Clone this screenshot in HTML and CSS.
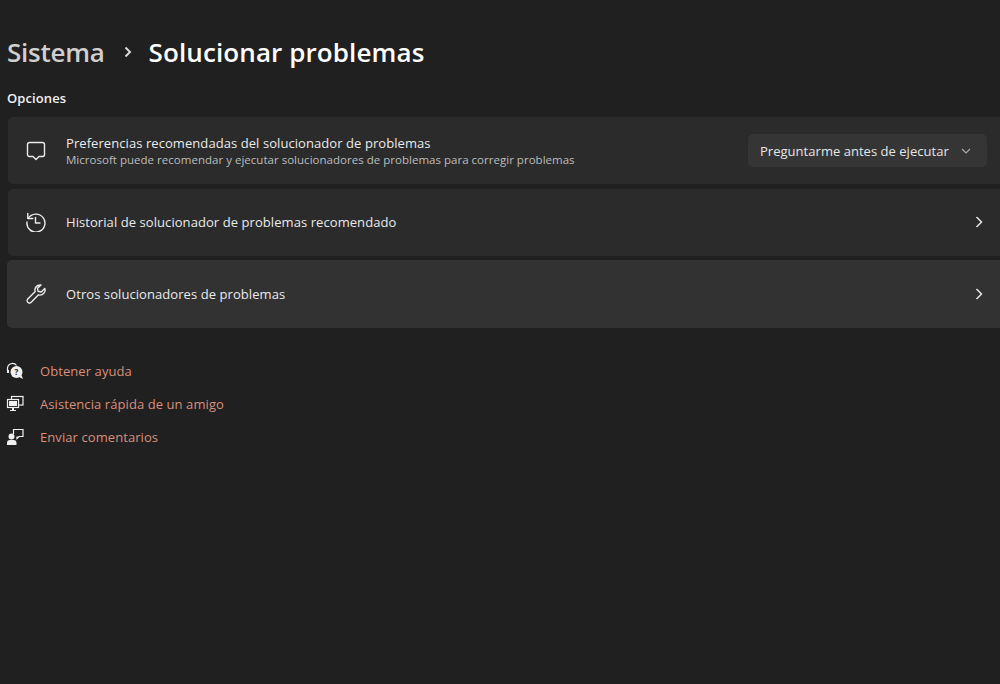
FILE: index.html
```html
<!DOCTYPE html>
<html lang="es">
<head>
<meta charset="utf-8">
<title>Solucionar problemas</title>
<link rel="stylesheet" href="styles.css">
</head>
<body>
<main class="page">
  <header class="crumbs">
    <span class="crumb-parent">Sistema</span>
    <svg class="crumb-sep" width="10" height="12" viewBox="0 0 10 12"><path d="M2.500 1.500 7 6l-4.500 4.500"/></svg>
    <h1 class="crumb-current">Solucionar problemas</h1>
  </header>
  <h2 class="section">Opciones</h2>
  <section class="cards">
    <div class="card">
      <svg class="card-icon" width="20" height="20" viewBox="0 0 20 20"><path d="M3.500 1.500h13a2 2 0 0 1 2 2v10a2 2 0 0 1-2 2h-3.500L10 18.500 7 15.500H3.500a2 2 0 0 1-2-2v-10a2 2 0 0 1 2-2z"/></svg>
      <div class="card-text">
        <div class="card-title">Preferencias recomendadas del solucionador de problemas</div>
        <div class="card-sub">Microsoft puede recomendar y ejecutar solucionadores de problemas para corregir problemas</div>
      </div>
      <div class="select">
        <span>Preguntarme antes de ejecutar</span>
        <svg class="select-chev" width="10" height="6" viewBox="0 0 10 6"><path d="M1 1l4 4 4-4"/></svg>
      </div>
    </div>
    <div class="card">
      <svg class="card-icon" width="20" height="20" viewBox="0 0 20 20"><path d="M2.200 6.500A9 9 0 1 1 1 10"/><path d="M1.800 1.500v5h5"/><path d="M9.500 5.500v5.500h4.500"/></svg>
      <div class="card-text"><div class="card-title">Historial de solucionador de problemas recomendado</div></div>
      <svg class="chev" width="8" height="12" viewBox="0 0 8 12"><path d="M1.500 1 6.500 6l-5 5"/></svg>
    </div>
    <div class="card card-hover">
      <svg class="card-icon" width="20" height="20" viewBox="0 0 20 20"><path d="M14 1a5 5 0 0 0-4.800 6.500L1.800 14.900a2.400 2.400 0 0 0 3.400 3.400l7.300-7.500A5 5 0 0 0 18.800 4.500l-3.600 3.500-3.100-.7-.6-3 3.500-3.300A5 5 0 0 0 14 1z"/></svg>
      <div class="card-text"><div class="card-title">Otros solucionadores de problemas</div></div>
      <svg class="chev" width="8" height="12" viewBox="0 0 8 12"><path d="M1.500 1 6.500 6l-5 5"/></svg>
    </div>
  </section>
  <nav class="links">
    <a class="link">
      <svg class="link-icon" width="18" height="18" viewBox="0 0 18 18">
        <path class="stroke" d="M1.500 9V6.500a5 5 0 0 1 9-3"/>
        <path class="fill" d="M1 8h2v3H1z"/>
        <circle class="fill" cx="10.500" cy="10" r="6"/>
        <path class="fill" d="M13 15l4 2-1.500-4z"/>
        <text class="qmark" x="10.500" y="13" text-anchor="middle">?</text>
      </svg>
      <span>Obtener ayuda</span>
    </a>
    <a class="link">
      <svg class="link-icon" width="18" height="18" viewBox="0 0 18 18">
        <rect class="stroke" x="5.500" y="1.500" width="11.500" height="8.500"/>
        <rect class="fill-d" x="1" y="4" width="12" height="9"/>
        <rect class="stroke" x="1.500" y="4.500" width="11" height="8"/>
        <rect class="fill" x="3" y="6" width="8" height="5"/>
        <path class="fill" d="M6 13h2v2h2v1H4v-1h2z"/>
      </svg>
      <span>Asistencia rápida de un amigo</span>
    </a>
    <a class="link">
      <svg class="link-icon" width="18" height="18" viewBox="0 0 18 18">
        <circle class="fill" cx="5.500" cy="8.500" r="3"/>
        <path class="fill" d="M1 17v-2a3 3 0 0 1 3-3h3.500a3 3 0 0 1 3 3v2z"/>
        <path class="stroke" d="M7.500 6V1.500h9.500v7h-4l-2 2v-2"/>
      </svg>
      <span>Enviar comentarios</span>
    </a>
  </nav>
</main>
</body>
</html>
```

FILE: styles.css
```css
* { box-sizing: border-box; }
html, body { margin: 0; height: 100%; }
body {
  background: #202020;
  color: #fff;
  font-family: "Open Sans", "Noto Sans", sans-serif;
  overflow: hidden;
}
.page { padding: 32px 0 0 7px; }
.crumbs { display: flex; align-items: center; height: 40px; }
.crumb-parent { font-size: 26px; font-weight: 600; color: #cfcfcf; letter-spacing: -0.25px; }
.crumb-sep { margin: 0 16px 0 18px; }
.crumb-sep path { fill: none; stroke: #d8d8d8; stroke-width: 2; }
.crumb-current { margin: 0; font-size: 26px; font-weight: 600; color: #fff; letter-spacing: 0.1px; }
.section { margin: 17px 0 0; font-size: 13px; font-weight: 600; line-height: 18px; height: 18px; letter-spacing: 0.1px; color: #f2f2f2; }
.cards { display: flex; flex-direction: column; gap: 4.500px; margin: 10px 0 0 1px; }
.card {
  display: flex; align-items: center; height: 67px;
  background: #2b2b2b; border-radius: 5px 0 0 5px;
  padding: 0 13px 0 18px;
}
.card-hover { background: #323232; margin-left: -1px; padding-left: 19px; height: 67.500px; }
.card-icon { flex: none; }
.card-icon path { fill: none; stroke: #ececec; stroke-width: 1.400; stroke-linejoin: round; stroke-linecap: round; }
.card-text { flex: 1; margin-left: 20px; min-width: 0; }
.card-title { font-size: 13px; line-height: 18px; color: #eaeaea; letter-spacing: 0.07px; }
.card-sub { font-size: 11.500px; line-height: 15px; color: #bdbdbd; letter-spacing: 0.02px; }
.select {
  display: flex; align-items: center; justify-content: space-between;
  width: 239px; height: 33px; padding: 0 16px 0 12px;
  background: #353535; border-radius: 5px; font-size: 13px; color: #e6e6e6; letter-spacing: 0.03px;
}
.select-chev path { fill: none; stroke: #a8a8a8; stroke-width: 1.200; }
.chev { margin-right: 4px; }
.chev path { fill: none; stroke: #e6e6e6; stroke-width: 1.500; }
.links { display: flex; flex-direction: column; gap: 15px; margin-top: 34.500px; }
.link { display: flex; align-items: center; height: 18px; font-size: 13px; color: #d98f7c; letter-spacing: 0.08px; }
.link-icon { flex: none; margin-right: 16px; margin-left: -1px; }
.link-icon .stroke { fill: none; stroke: #f0f0f0; stroke-width: 1.200; }
.link-icon .fill { fill: #f0f0f0; }
.link-icon .fill-d { fill: #202020; }
.qmark { font-size: 8px; font-weight: 700; fill: #202020; }
```
